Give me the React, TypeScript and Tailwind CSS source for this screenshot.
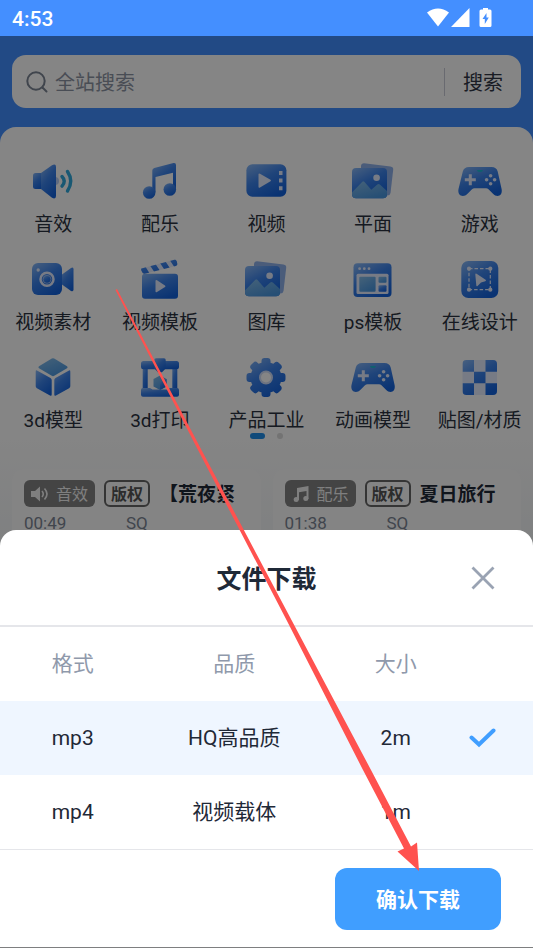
import { useState, type ReactNode } from "react";

const BLUE = "url(#blue)";
const SKY = "url(#sky)";
const PALE = "#e4ecff";

function Icon({ children }: { children: ReactNode }) {
    return (
        <svg viewBox="0 0 40 40" className="size-10 overflow-visible" aria-hidden="true">
            {children}
        </svg>
    );
}

// Gradients shared by every category icon
function Gradients() {
    return (
        <svg className="absolute size-0" aria-hidden="true">
            <defs>
                <linearGradient id="blue" x1="0.1" y1="0" x2="0.7" y2="1">
                    <stop offset="0" stopColor="#84b4f4" />
                    <stop offset="0.45" stopColor="#3d83ea" />
                    <stop offset="1" stopColor="#1362dc" />
                </linearGradient>
                <linearGradient id="sky" x1="0" y1="0" x2="0.6" y2="1">
                    <stop offset="0" stopColor="#86bdea" />
                    <stop offset="1" stopColor="#4a97e0" />
                </linearGradient>
                <clipPath id="clapper">
                    <path d="M1.4 9.6 34.4 .8q2-.4 2.4 1.4l.5 2.6q.3 1.6-1.5 2.2L4.8 14.7q-2 .4-2.6-1.4l-1-2Q1 10 1.4 9.6z" />
                </clipPath>
                <clipPath id="gear">
                    <circle cx="20" cy="20.5" r="15.5" />
                    {[0, 45, 90, 135].map((angle) => (
                        <rect
                            key={angle}
                            x="15.5"
                            y="1"
                            width="9"
                            height="39"
                            rx="3"
                            transform={`rotate(${angle} 20 20.5)`}
                        />
                    ))}
                </clipPath>
                <clipPath id="board">
                    <rect x="2.5" y="3" width="34.5" height="35" rx="4" />
                </clipPath>
            </defs>
        </svg>
    );
}

function SoundIcon() {
    return (
        <Icon>
            <circle cx="22" cy="20" r="4" fill="#b9cdf5" />
            <rect x="0" y="12" width="11" height="16" rx="2.5" fill={BLUE} />
            <path d="M8 12 19 4.2q4-2 4 1.8v29q0 3.6-4 1.8L8 28z" fill={BLUE} />
            <path
                d="M29 15.5q4.500 4.800 0 9.600M34.500 10.500q6.500 9.600 0 19.500"
                fill="none"
                stroke="#2fa9dc"
                strokeWidth="3.4"
                strokeLinecap="round"
            />
        </Icon>
    );
}

function MusicIcon() {
    return (
        <Icon>
            <path
                d="M12.3 9.500q0-2 2-2.500L33.500 2q2.500-.4 2.500 2v24h-3V11.800L15.500 16v15h-3.200z"
                fill={BLUE}
            />
            <circle cx="9.2" cy="31.5" r="6.3" fill={BLUE} />
            <circle cx="29.8" cy="28.5" r="6.3" fill={BLUE} />
        </Icon>
    );
}

function VideoIcon() {
    return (
        <Icon>
            <rect x="0.4" y="3.3" width="40" height="32.5" rx="6" fill={BLUE} />
            <path d="M12.500 13.500q0-1.500 1.500-.8l10.500 6q1 .8 0 1.600l-10.500 6.300q-1.500.8-1.500-.8z" fill={PALE} />
            <path d="M33 10h3.500v4H33zM33 17.600h3.500v4H33zM33 25.200h3.500v4H33z" fill={PALE} />
        </Icon>
    );
}

function PictureIcon() {
    return (
        <Icon>
            <path
                d="M11 2.300 37.500 5.500q3 .5 2.700 3.300L37.500 32q-.5 2.600-3 2.600L8 30V5q.2-2.700 3-2.700z"
                fill="#8fb0ea"
            />
            <rect x="-1" y="7" width="35" height="30.3" rx="4" fill={BLUE} />
            <path
                d="M-1 31.500 9.300 20.800q1-1 2 0l7 8 6-5.300q1.300-1 2.500 0L34 30v3.300q0 4-4 4H3q-4 0-4-4z"
                fill={SKY}
            />
            <circle cx="23.6" cy="16.7" r="3.3" fill={PALE} />
        </Icon>
    );
}

function GamepadIcon() {
    return (
        <Icon>
            <path
                d="M9 6h22.500q5 0 6.200 4.500L41.600 28c1.300 7-4.600 9-8.600 4.800l-4.500-4.600q-1-.9-2.500-.9H14.500q-1.500 0-2.500.9l-4.500 4.600C3.500 37-2.800 35-1.500 28L2.800 10.500Q4 6 9 6z"
                fill={BLUE}
            />
            <path d="M8.800 13.200h3v4h4v3h-4v4h-3v-4h-4v-3h4z" fill={PALE} />
            <g fill={PALE}>
                <circle cx="30.6" cy="14.7" r="1.8" />
                <circle cx="30.6" cy="22.7" r="1.8" />
                <circle cx="26.6" cy="18.7" r="1.8" />
                <circle cx="34.6" cy="18.7" r="1.8" />
            </g>
            <path d="M17 9h6q-.5 2-2 2h-2q-1.500 0-2-2z" fill="#20b8d4" />
        </Icon>
    );
}

function CameraIcon() {
    return (
        <Icon>
            <path
                d="M29 15.500 38 9q2.500-1.300 2.500 1.200v20.300q0 2.600-2.500 1.400L29 25.500z"
                fill={BLUE}
            />
            <rect x="-1" y="4" width="30" height="32" rx="6" fill={BLUE} />
            <circle cx="14" cy="20.3" r="6.5" fill="none" stroke={PALE} strokeWidth="2.5" />
            <circle cx="14" cy="20.3" r="4" fill={BLUE} stroke="#a9c6f5" strokeWidth="0.8" />
            <circle cx="5.2" cy="11" r="1.7" fill={PALE} />
        </Icon>
    );
}

function ClapperIcon() {
    return (
        <Icon>
            <g clipPath="url(#clapper)">
                <rect x="0" y="0" width="40" height="16" fill={PALE} />
                <path
                    d="M-1 7l6 0 5 8-8 3zM9 5l5.500-1.500 6 9-5.500 1.500zM19 2.500l5.500-1.500 6 9-5.500 1.500zM29 0l5.500-1.500 6 9-5.500 1.500z"
                    fill={BLUE}
                />
            </g>
            <rect x="2" y="14.7" width="36" height="25" rx="3" fill={BLUE} />
            <path d="M15.500 22q0-1.500 1.500-.8l8 5.200q1 .8 0 1.600l-8 5q-1.500.8-1.500-.8z" fill={PALE} />
        </Icon>
    );
}

function WindowIcon() {
    return (
        <Icon>
            <rect x="0.5" y="4.3" width="38" height="33.7" rx="4" fill={BLUE} />
            <g fill={PALE}>
                <circle cx="6.6" cy="9.7" r="1.4" />
                <circle cx="11.3" cy="9.7" r="1.4" />
                <circle cx="16" cy="9.7" r="1.4" />
                <rect x="3.5" y="14.7" width="32" height="20.3" rx="1.5" />
            </g>
            <rect x="6.3" y="17.7" width="16.3" height="15" rx="1" fill={SKY} />
            <rect x="25.5" y="17.7" width="8" height="6" rx="1" fill={SKY} />
            <rect x="25.5" y="26.3" width="8" height="6.5" rx="1" fill={BLUE} />
        </Icon>
    );
}

function DesignIcon() {
    return (
        <Icon>
            <rect x="1.3" y="2" width="37" height="37" rx="7" fill={BLUE} />
            <rect
                x="9"
                y="9.7"
                width="21.3"
                height="21"
                fill="none"
                stroke={PALE}
                strokeWidth="1.2"
                strokeDasharray="3.5 2"
            />
            <g fill={PALE}>
                <circle cx="9" cy="9.7" r="2.1" />
                <circle cx="30.3" cy="9.7" r="2.1" />
                <circle cx="9" cy="30.7" r="2.1" />
                <circle cx="30.3" cy="30.7" r="2.1" />
                <path d="M15.300 15.500q0-1.500 1.300-.7l9 6q1 1-.3 1.400l-4.300 1.200-3.500 3.500q-1 .8-1.200-.5z" />
            </g>
        </Icon>
    );
}

function CubeIcon() {
    return (
        <Icon>
            <path d="M18.800 1.500q1.200-.7 2.400 0L34 9.300q1.300 1 0 2l-12.800 7.500q-1.200.7-2.400 0L6 11.300q-1.300-1 0-2z" fill={SKY} />
            <path d="M2.700 14.700q0-2 1.700-1L17.500 21q1.200.8 1.200 2v14.500q0 2-1.700 1L3.900 31.300q-1.200-.8-1.200-2z" fill={BLUE} />
            <path d="M37.300 14.700q0-2-1.700-1L22.500 21q-1.200.8-1.200 2v14.500q0 2 1.700 1l13.100-7.200q1.200-.8 1.200-2z" fill={BLUE} />
        </Icon>
    );
}

function PrinterIcon() {
    return (
        <Icon>
            <rect x="2.7" y="8" width="5" height="26" fill={BLUE} />
            <rect x="32.3" y="8" width="5" height="26" fill={BLUE} />
            <rect x="1" y="4" width="38" height="8.3" rx="2.5" fill={BLUE} />
            <path d="M14.300 3q0-1.700 1.700-1.700h8q1.700 0 1.700 1.700v8.500L22 15.300h-4l-3.700-3.800z" fill={BLUE} />
            <path d="M20 18.500l6.500 3.500v7.500L20 33l-6.500-3.500V22z" fill={SKY} />
            <path d="M20 25.500l6.500-3.500v7.500L20 33z" fill={BLUE} />
            <path d="M3 31h7l2.500 1.500h15L30 31h7q2 0 2 2v4.700q0 2-2 2H3q-2 0-2-2V33q0-2 2-2z" fill={BLUE} />
        </Icon>
    );
}

function GearIcon() {
    return (
        <Icon>
            <rect x="0" y="1" width="40" height="39" fill={BLUE} clipPath="url(#gear)" />
            <circle cx="20" cy="20.5" r="6" fill="#fff" stroke="#cfdcf8" strokeWidth="2" />
        </Icon>
    );
}

function CheckerIcon() {
    return (
        <Icon>
            <g clipPath="url(#board)">
                <rect x="2" y="3" width="36" height="36" fill={PALE} />
                <path
                    d="M2.500 3H14v11.700H2.500zM25.500 3H37v11.700H25.500zM14 14.700h11.500v11.600H14zM2.500 26.300H14V38H2.500zM25.500 26.300H37V38H25.500z"
                    fill={BLUE}
                />
            </g>
        </Icon>
    );
}

const categories = [
    { label: "音效", icon: <SoundIcon /> },
    { label: "配乐", icon: <MusicIcon /> },
    { label: "视频", icon: <VideoIcon /> },
    { label: "平面", icon: <PictureIcon /> },
    { label: "游戏", icon: <GamepadIcon /> },
    { label: "视频素材", icon: <CameraIcon /> },
    { label: "视频模板", icon: <ClapperIcon /> },
    { label: "图库", icon: <PictureIcon /> },
    { label: "ps模板", icon: <WindowIcon /> },
    { label: "在线设计", icon: <DesignIcon /> },
    { label: "3d模型", icon: <CubeIcon /> },
    { label: "3d打印", icon: <PrinterIcon /> },
    { label: "产品工业", icon: <GearIcon /> },
    { label: "动画模型", icon: <GamepadIcon /> },
    { label: "贴图/材质", icon: <CheckerIcon /> },
];

function StatusBar() {
    return (
        <div className="flex h-9 shrink-0 items-center justify-between bg-[#448fff] pl-3 pr-10 text-white">
            <span className="pt-[3px] text-[21px] font-medium">4:53</span>
            <svg viewBox="0 0 66 20" className="h-5 w-[66px]" fill="currentColor" aria-hidden="true">
                <path d="M0 4.500Q11-3.500 22 4.500L11 18.500z" />
                <path d="M42.500 0v19H24z" />
                <path
                    fillRule="evenodd"
                    d="M56 0h5v1.500h2q1.500 0 1.500 1.500v14.500q0 1.500-1.500 1.500h-9q-1.500 0-1.500-1.500V3q0-1.500 1.500-1.500h2zM59.500 5l-4 6h2.300v5l4-6.500h-2.300z"
                />
            </svg>
        </div>
    );
}

function SearchBar() {
    return (
        <form className="mx-3 flex h-[53px] items-center rounded-[14px] bg-white pl-[14px]">
            <svg viewBox="0 0 22 22" className="size-[22px] shrink-0" fill="none" stroke="#7c8594" strokeWidth="2" strokeLinecap="round" aria-hidden="true">
                <circle cx="10" cy="10" r="8.7" />
                <path d="M16.500 16.500 20.500 20.500" />
            </svg>
            <input
                type="search"
                aria-label="全站搜索"
                placeholder="全站搜索"
                className="ml-[7px] min-w-0 flex-1 pt-[3px] text-[20px] outline-none placeholder:text-[#8d94a3]"
            />
            <button type="button" className="border-l border-[#c9cbd6] px-[18px] pt-[2px] text-[20px] leading-[26px] text-[#303645]">
                搜索
            </button>
        </form>
    );
}

function SmallSound() {
    return (
        <svg viewBox="0 0 18 16" className="h-4 w-[18px]" aria-hidden="true">
            <path d="M0 5h4l5-4.500v15L4 11H0z" fill="currentColor" />
            <path d="M11 5q2.500 3 0 6M13.500 2.500q5 5.500 0 11" fill="none" stroke="currentColor" strokeWidth="1.6" />
        </svg>
    );
}

function SmallMusic() {
    return (
        <svg viewBox="0 0 18 16" className="h-4 w-[18px]" fill="currentColor" aria-hidden="true">
            <path d="M5 2 16.500 0v13h-2V5L7 6.300V14H5z" />
            <circle cx="4.2" cy="13.5" r="2.5" />
            <circle cx="13.8" cy="12.5" r="2.5" />
        </svg>
    );
}

interface TrackProps {
    kind: string;
    icon: ReactNode;
    title: string;
    time: string;
}

function Track({ kind, icon, title, time }: TrackProps) {
    return (
        <article className="h-[120px] min-w-0 flex-1 overflow-hidden rounded-xl bg-[#fdfdfd] px-3 pt-[11px]">
            <div className="flex h-[27px] items-center gap-[9px] whitespace-nowrap">
                <span className="flex h-[27px] items-center gap-[7px] rounded-md bg-[#828282] px-[7px] text-[16px] text-[#f4f4f4]">
                    {icon}
                    <span className="pt-[3px]">{kind}</span>
                </span>
                <span className="flex h-[27px] items-center rounded-md border-2 border-[#666] px-[5px] pt-[2px] text-[16px] font-bold text-[#555]">
                    版权
                </span>
                <h3 className="pt-[3px] text-[19px] font-bold leading-6 text-[#1f2937]">{title}</h3>
            </div>
            <div className="mt-1 flex text-[17px] leading-6 text-[#7c8594]">
                <span className="w-[102px]">{time}</span>
                <span>SQ</span>
            </div>
        </article>
    );
}

const files = [
    { format: "mp3", quality: "HQ高品质", size: "2m" },
    { format: "mp4", quality: "视频载体", size: "1m" },
];

function DownloadSheet() {
    const [selected, setSelected] = useState("mp3");

    return (
        <section
            role="dialog"
            aria-labelledby="sheet-title"
            className="rounded-t-2xl bg-white text-[21px] text-[#1f2937]"
        >
            <header className="relative flex h-[97px] items-center justify-center border-b-2 border-[#e5e6ea]">
                <h2 id="sheet-title" className="pt-1 text-[25px] font-bold">
                    文件下载
                </h2>
                <button type="button" aria-label="关闭" className="absolute right-[38px]">
                    <svg viewBox="0 0 24 24" className="size-6" fill="none" stroke="#9aa3b3" strokeWidth="2.8">
                        <path d="M1.500 1.500l21 21M22.500 1.500l-21 21" />
                    </svg>
                </button>
            </header>
            <table className="w-full table-fixed text-center">
                <thead>
                    <tr className="h-[74px] text-[#8f99ab]">
                        <th className="w-3/11 pt-[2px] font-normal">格式</th>
                        <th className="w-1/3 pt-[2px] font-normal">品质</th>
                        <th className="w-3/11 pt-[2px] font-normal">大小</th>
                        <td />
                    </tr>
                </thead>
                <tbody>
                    {files.map(({ format, quality, size }) => (
                        <tr key={format} className="h-[74px] has-checked:bg-[#eff6ff]">
                            <td className="pt-[2px]">{format}</td>
                            <td className="pt-[2px]">{quality}</td>
                            <td className="pt-[2px]">{size}</td>
                            <td>
                                <label className="relative block h-7 cursor-pointer">
                                    <input
                                        type="radio"
                                        name="file"
                                        aria-label={format}
                                        checked={selected === format}
                                        onChange={() => setSelected(format)}
                                        className="peer absolute inset-0 appearance-none"
                                    />
                                    <svg
                                        viewBox="0 0 28 28"
                                        className="hidden size-7 peer-checked:block"
                                        fill="none"
                                        stroke="#409eff"
                                        strokeWidth="4"
                                        strokeLinecap="round"
                                        aria-hidden="true"
                                    >
                                        <path d="M3.500 13.500l7.500 7L25.500 6.500" />
                                    </svg>
                                </label>
                            </td>
                        </tr>
                    ))}
                </tbody>
            </table>
            <footer className="flex justify-end border-t border-[#e5e6ea] px-8 pb-[17px] pt-[18px]">
                <button type="button" className="h-[62px] rounded-xl bg-[#409eff] px-[41px] pt-1 font-bold text-white">
                    确认下载
                </button>
            </footer>
        </section>
    );
}

// Red pointer that leads the eye to the confirm button
function Pointer() {
    return (
        <svg viewBox="0 0 533 948" className="pointer-events-none absolute inset-0 size-full" fill="#ff524f" aria-hidden="true">
            <path d="M115.500 290l1.500-1L201.500 450l90 170 79.500 150 40 76.500 6-4 2 28.500-21.500-19.500 6.500-3L363 770 286.500 620 198 450z" />
        </svg>
    );
}

export default function App() {
    return (
        <div className="relative flex h-screen flex-col overflow-hidden font-['Roboto','Noto_Sans_CJK_SC',sans-serif]">
            <Gradients />
            <StatusBar />
            <div className="relative flex-1 overflow-hidden bg-[#428fff]">
                <main className="flex h-full flex-col pt-[19px]">
                    <SearchBar />
                    <div className="mt-[19px] flex flex-1 flex-col rounded-t-2xl bg-white pt-[34px]">
                        <nav className="grid grid-cols-5 gap-y-5">
                            {categories.map(({ label, icon }) => (
                                <a
                                    key={label}
                                    href="#"
                                    className="flex flex-col items-center gap-[10px] whitespace-nowrap text-[19px] leading-7 text-[#2b3240]"
                                >
                                    {icon}
                                    {label}
                                </a>
                            ))}
                        </nav>
                        <div className="-mt-[2px] flex items-center justify-center gap-3">
                            <span className="h-[6px] w-[15px] rounded-full bg-[#1f8fea]" />
                            <span className="size-[6px] rounded-full bg-[#dcdcdc]" />
                        </div>
                        <div className="flex-1 bg-linear-to-b from-white to-[#f1f4f6] to-25% px-3 pt-[30px]">
                            <div className="flex gap-3">
                                <Track kind="音效" icon={<SmallSound />} title="【荒夜紧" time="00:49" />
                                <Track kind="配乐" icon={<SmallMusic />} title="夏日旅行" time="01:38" />
                            </div>
                        </div>
                    </div>
                </main>
                <div className="absolute inset-0 flex flex-col justify-end bg-black/48 pb-px">
                    <DownloadSheet />
                </div>
            </div>
            <Pointer />
        </div>
    );
}
